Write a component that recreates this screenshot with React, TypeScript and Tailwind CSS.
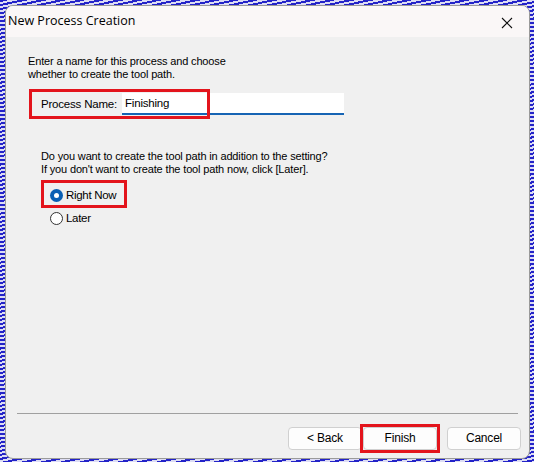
import React from 'react';

const RedBox: React.FC<{ className: string }> = ({ className }) => (
  <div className={`pointer-events-none absolute border-[3px] border-[#e3141c] ${className}`} />
);

const Radio: React.FC<{ checked?: boolean; label: string }> = ({ checked, label }) => (
  <label className="flex h-[23px] items-center gap-[3px]">
    {checked ? (
      <span className="flex h-[13px] w-[13px] items-center justify-center rounded-full bg-[#0a5fb4]">
        <span className="h-[5px] w-[5px] rounded-full bg-white" />
      </span>
    ) : (
      <span className="h-[13px] w-[13px] rounded-full border border-[#333] bg-white" />
    )}
    <span className="text-[11.5px] leading-none tracking-[-0.3px] text-black">{label}</span>
  </label>
);

const WizardButton: React.FC<{ label: string; className?: string }> = ({ label, className = '' }) => (
  <button
    className={`h-[23px] w-[74px] rounded-[4px] border border-[#d0d0d0] bg-[#fdfdfd] text-[12px] tracking-[-0.2px] text-black ${className}`}
  >
    {label}
  </button>
);

export default function App() {
  return (
    <div className="h-[462px] w-[534px] bg-[repeating-linear-gradient(168deg,#2323c8_0px,#2323c8_2px,#dcdcf4_2px,#dcdcf4_4px)] pl-[5px] pt-[5px]">
      <div
        className="flex h-[454px] w-[525px] flex-col overflow-hidden rounded-[8px] border border-[#9a9a9a] bg-[#f0f0f0] text-black"
        style={{ fontFamily: '"Liberation Sans", Arial, sans-serif' }}
      >
        {/* title bar */}
        <div className="flex h-[31px] items-center justify-between bg-[#faf7f7] pl-[2px] pr-[16px]">
          <span className="text-[12.5px] font-normal" style={{ fontFamily: '"Open Sans", "Liberation Sans", sans-serif' }}>
            New Process Creation
          </span>
          <svg width="12" height="12" viewBox="0 0 12 12" className="mt-[2px]">
            <path d="M1 1 L11 11 M11 1 L1 11" stroke="#111" strokeWidth="1.1" fill="none" />
          </svg>
        </div>

        {/* body */}
        <div className="flex flex-1 flex-col pt-[18px] text-[11px] leading-[13px] tracking-[-0.15px]">
          <p className="pl-[22px]">
            Enter a name for this process and choose
            <br />
            whether to create the tool path.
          </p>

          <div className="relative ml-[35px] mt-[12px] flex h-[22px] items-center">
            <span className="w-[81px] shrink-0 whitespace-nowrap text-[11.5px] tracking-[-0.2px]">Process Name:</span>
            <div className="flex h-[22px] w-[222px] shrink-0 items-center border-b-2 border-[#1664b4] bg-white pl-[3px] text-[11.5px] tracking-[-0.2px]">
              Finishing
            </div>
            <RedBox className="-left-[12px] -top-[4px] h-[30px] w-[181px]" />
          </div>

          <p className="ml-[35px] mt-[35px]">
            Do you want to create the tool path in addition to the setting?
            <br />
            If you don&apos;t want to create the tool path now, click [Later].
          </p>

          <div className="relative ml-[44px] mt-[8px] flex flex-col">
            <Radio checked label="Right Now" />
            <Radio label="Later" />
            <RedBox className="-left-[9px] top-[-4px] h-[28px] w-[86px]" />
          </div>

          <div className="mt-auto">
            <div className="mx-[11px] h-px bg-[#a0a0a0]" />
            <div className="flex justify-end pb-[8px] pr-[8px] pt-[13px]">
              <WizardButton label="< Back" />
              <div className="relative ml-px">
                <WizardButton label="Finish" />
                <RedBox className="-left-[3px] -top-[3px] h-[29px] w-[80px]" />
              </div>
              <WizardButton label="Cancel" className="ml-[10px]" />
            </div>
          </div>
        </div>
      </div>
    </div>
  );
}
